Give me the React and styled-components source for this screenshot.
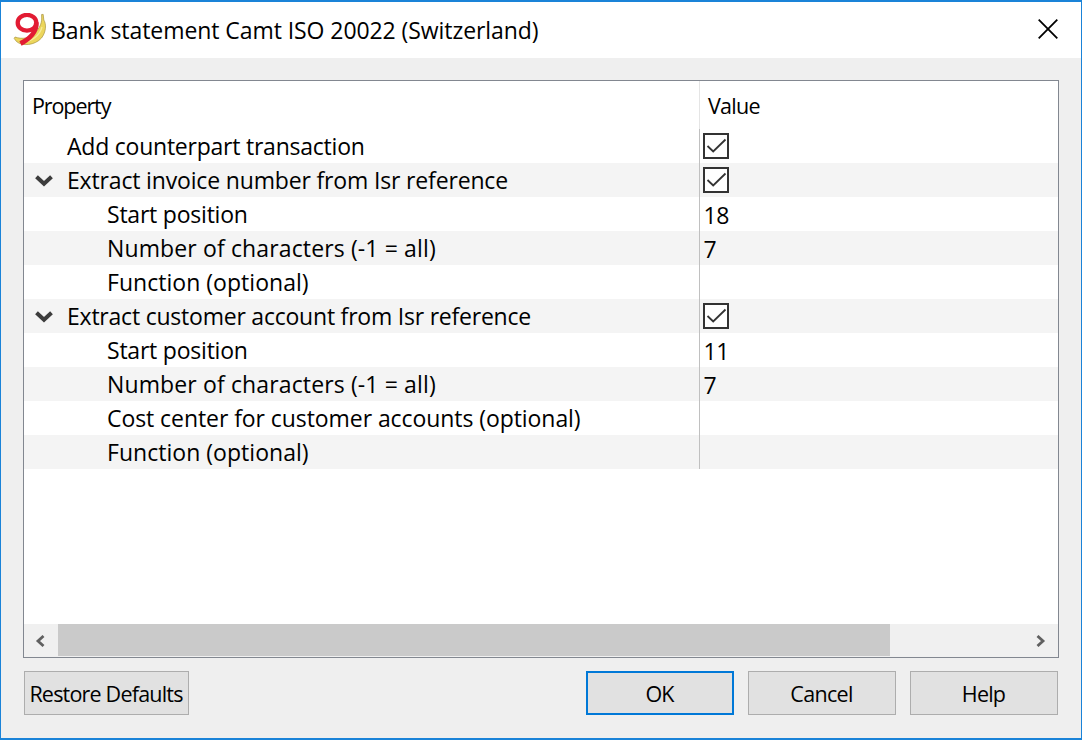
import React from "react";
import styled, { createGlobalStyle } from "styled-components";

const Global = createGlobalStyle`
  *, *::before, *::after { box-sizing: border-box; }
  html, body { margin: 0; padding: 0; overflow: hidden; }
  button { font: inherit; }
`;

const Dialog = styled.div`
  display: flex;
  flex-direction: column;
  width: 1082px;
  height: 740px;
  border: solid #1a83d8;
  border-width: 2px 1px;
  background: #efefef;
  color: #000;
  font-family: "Open Sans", "Noto Sans", sans-serif;
`;

const TitleBar = styled.header`
  display: flex;
  align-items: center;
  flex: none;
  height: 56px;
  padding-left: 12px;
  background: #fff;
`;

const Logo = styled.svg`
  flex: none;
  width: 34px;
  height: 34px;
`;

const Title = styled.h1`
  flex: 1;
  margin: 0 0 0 4px;
  font-size: 23px;
  font-weight: 400;
  line-height: 32px;
  letter-spacing: ${(p) => p.$track}px;
  white-space: nowrap;
`;

const CloseButton = styled.button`
  display: grid;
  place-items: center;
  width: 66px;
  height: 56px;
  padding: 0 0 2px;
  border: 0;
  background: none;
`;

const Body = styled.main`
  display: flex;
  flex-direction: column;
  flex: 1;
  padding: 22px 22px 23px;
`;

const Tree = styled.section`
  display: flex;
  flex-direction: column;
  flex: none;
  height: 578px;
  border: 1px solid #828790;
  background: #fff;
`;

const HeaderRow = styled.div`
  display: flex;
  flex: none;
  height: 48px;
  font-size: 21.5px;
  line-height: 49px;
`;

const HeaderCell = styled.div`
  width: ${(p) => p.$width || "auto"};
  padding-left: 8px;
  border-right: ${(p) => (p.$width ? "1px solid #e5e5e5" : "0")};
  letter-spacing: ${(p) => p.$track}px;
`;

const Rows = styled.div`
  flex: 1;
`;

const Row = styled.div`
  display: flex;
  height: 34px;
  background: ${(p) => (p.$shaded ? "#f4f4f4" : "#fff")};
  font-size: 23px;
`;

const NameCell = styled.div`
  display: flex;
  width: 676px;
  padding-left: ${(p) => (p.$level ? 83 : 0)}px;
  border-right: 1px solid #c0c0c0;
  line-height: 35px;
  white-space: nowrap;
`;

const Expander = styled.span`
  display: grid;
  place-items: center;
  width: 40px;
  height: 34px;
  margin-right: 3px;
`;

const Label = styled.span`
  letter-spacing: ${(p) => p.$track}px;
`;

const ValueCell = styled.div`
  height: 34px;
  padding: ${(p) => (p.$check ? "4px 0 0 3px" : "0 0 0 3.5px")};
  line-height: 36px;
  letter-spacing: -0.3px;
`;

const CheckBox = styled.span`
  display: grid;
  place-items: center;
  width: 26px;
  height: 26px;
  border: 2px solid #333;
  background: #fff;
`;

const ScrollBar = styled.div`
  display: flex;
  flex: none;
  height: 33px;
  background: #f0f0f0;
`;

const ScrollArrow = styled.span`
  display: grid;
  place-items: center;
  width: 34px;
  height: 33px;
  padding-right: ${(p) => (p.$left ? 2 : 0)}px;
`;

const ScrollTrack = styled.div`
  flex: 1;
`;

const ScrollThumb = styled.div`
  width: 832px;
  height: 32px;
  background: #cacaca;
`;

const Footer = styled.footer`
  display: flex;
  gap: 14px;
  margin-top: 13px;
  padding: 0 1px;
`;

const Button = styled.button`
  width: ${(p) => p.$width || 148}px;
  height: 44px;
  margin-right: ${(p) => (p.$push ? "auto" : 0)};
  padding: 2px 1px 0 0;
  border: ${(p) => (p.$primary ? "2px solid #0078d7" : "1px solid #adadad")};
  background: #e1e1e1;
  color: #000;
  font-size: 21.5px;
  line-height: 30px;
  letter-spacing: ${(p) => p.$track}px;
  white-space: nowrap;
`;

const rows = [
  { label: "Add counterpart transaction", track: -0.23, level: 0, checked: true },
  { label: "Extract invoice number from Isr reference", track: -0.16, level: 0, open: true, checked: true },
  { label: "Start position", track: -0.22, level: 1, value: "18" },
  { label: "Number of characters (-1 = all)", track: 0.13, level: 1, value: "7" },
  { label: "Function (optional)", track: 0.03, level: 1 },
  { label: "Extract customer account from Isr reference", track: -0.22, level: 0, open: true, checked: true },
  { label: "Start position", track: -0.22, level: 1, value: "11" },
  { label: "Number of characters (-1 = all)", track: 0.13, level: 1, value: "7" },
  { label: "Cost center for customer accounts (optional)", track: -0.07, level: 1 },
  { label: "Function (optional)", track: 0.03, level: 1 },
];

function PropertyRow({ row, shaded }) {
  return (
    <Row $shaded={shaded}>
      <NameCell $level={row.level}>
        {row.level === 0 && (
          <Expander>
            {row.open && (
              <svg width="20" height="14" viewBox="0 0 20 14">
                <path d="M2.5 3.8 10 10.8 17.5 3.8" fill="none" stroke="#3c3c3c" strokeWidth="4" />
              </svg>
            )}
          </Expander>
        )}
        <Label $track={row.track}>{row.label}</Label>
      </NameCell>
      <ValueCell $check={row.checked}>
        {row.checked ? (
          <CheckBox>
            <svg width="22" height="22" viewBox="0 0 22 22">
              <path d="M2.5 11 8.2 16.5 20.5 4.5" fill="none" stroke="#333" strokeWidth="1.8" />
            </svg>
          </CheckBox>
        ) : (
          row.value
        )}
      </ValueCell>
    </Row>
  );
}

export default function App() {
  return (
    <Dialog>
      <Global />
      <TitleBar>
        <Logo viewBox="0 0 34 34">
          <path d="M28.600 1.500 30.200 1.400 30.800 7C33.500 11 33.200 19 28.500 25 22 32.500 9 33.500 3.500 28.500L1.200 25.500 2 24C9 26.500 17 25.500 22 20 26.500 15 28.500 11 28.700 6Z" fill="#ecd65c" stroke="#a8923f" strokeWidth=".7" />
          <path d="M29 14C27 22 19 29 9 29.5" fill="none" stroke="#f7eb9a" strokeWidth="1.3" />
          <ellipse cx="14" cy="9.8" rx="9.300" ry="7.900" fill="none" stroke="#e21b33" strokeWidth="4.300" />
          <path d="M23.300 9.500C24 18.500 16.500 26 7.500 30.500" fill="none" stroke="#e21b33" strokeWidth="4.800" />
        </Logo>
        <Title $track={-0.07}>Bank statement Camt ISO 20022 (Switzerland)</Title>
        <CloseButton aria-label="Close">
          <svg width="20" height="20" viewBox="0 0 20 20">
            <path d="M.7.7 19.3 19.3M19.3.7.7 19.3" stroke="#000" strokeWidth="1.8" />
          </svg>
        </CloseButton>
      </TitleBar>
      <Body>
        <Tree>
          <HeaderRow>
            <HeaderCell $width="676px" $track={-1.1}>Property</HeaderCell>
            <HeaderCell $track={-0.7}>Value</HeaderCell>
          </HeaderRow>
          <Rows>
            {rows.map((row, i) => (
              <PropertyRow key={i} row={row} shaded={i % 2 === 1} />
            ))}
          </Rows>
          <ScrollBar>
            <ScrollArrow $left>
              <svg width="10" height="12" viewBox="0 0 10 12">
                <path d="M8.5 1 3 6 8.5 11" fill="none" stroke="#606060" strokeWidth="2.8" />
              </svg>
            </ScrollArrow>
            <ScrollTrack>
              <ScrollThumb />
            </ScrollTrack>
            <ScrollArrow>
              <svg width="10" height="12" viewBox="0 0 10 12">
                <path d="M1.5 1 7 6 1.5 11" fill="none" stroke="#606060" strokeWidth="2.8" />
              </svg>
            </ScrollArrow>
          </ScrollBar>
        </Tree>
        <Footer>
          <Button $width={165} $push $track={-0.8}>Restore Defaults</Button>
          <Button $primary $track={-1}>OK</Button>
          <Button $track={-0.7}>Cancel</Button>
          <Button $track={-0.8}>Help</Button>
        </Footer>
      </Body>
    </Dialog>
  );
}
